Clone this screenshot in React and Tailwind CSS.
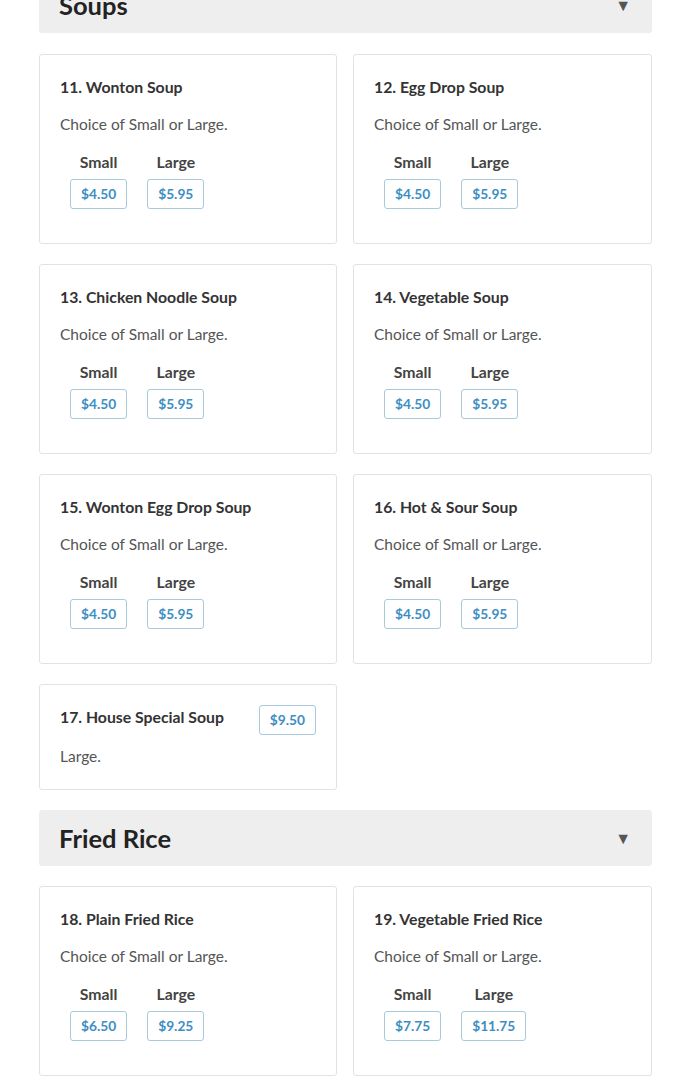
import React from "react";

const soups = [
  { name: "11. Wonton Soup", small: "$4.50", large: "$5.95" },
  { name: "12. Egg Drop Soup", small: "$4.50", large: "$5.95" },
  { name: "13. Chicken Noodle Soup", small: "$4.50", large: "$5.95" },
  { name: "14. Vegetable Soup", small: "$4.50", large: "$5.95" },
  { name: "15. Wonton Egg Drop Soup", small: "$4.50", large: "$5.95" },
  { name: "16. Hot & Sour Soup", small: "$4.50", large: "$5.95" },
];

const friedRice = [
  { name: "18. Plain Fried Rice", small: "$6.50", large: "$9.25" },
  { name: "19. Vegetable Fried Rice", small: "$7.75", large: "$11.75" },
];

const Price = ({ children }) => (
  <span className="flex h-[30px] items-center rounded-[3px] border border-[#a8cadb] px-[10px] text-[13.75px] font-bold text-[#3d8ec3]">
    {children}
  </span>
);

const SectionHeader = ({ title }) => (
  <div className="flex h-[56px] items-center justify-between rounded-[3px] bg-[#eeeeee] pl-5 pr-[21px]">
    <h2 className="text-[25.5px] font-bold text-[#222]">{title}</h2>
    <span className="text-[16px] text-[#555]">▼</span>
  </div>
);

const SizedCard = ({ item }) => (
  <div className="rounded-[3px] border border-[#e2e2e2] bg-white px-5 pb-[34px] pt-5">
    <h3 className="text-[15.8px] font-bold leading-6 text-[#333]">{item.name}</h3>
    <p className="mt-[13px] text-[15.5px] leading-6 text-[#555]">Choice of Small or Large.</p>
    <div className="mt-[14px] flex gap-5 pl-[10px]">
      <div className="flex flex-col items-center gap-[5px]">
        <span className="text-[15.8px] font-bold leading-6 text-[#444]">Small</span>
        <Price>{item.small}</Price>
      </div>
      <div className="flex flex-col items-center gap-[5px]">
        <span className="text-[15.8px] font-bold leading-6 text-[#444]">Large</span>
        <Price>{item.large}</Price>
      </div>
    </div>
  </div>
);

export default function App() {
  return (
    <div
      className="min-h-screen bg-white pl-[39px] pr-[38px]"
      style={{ fontFamily: "Lato, 'Open Sans', sans-serif" }}
    >
      <div className="-mt-[23px]">
        <SectionHeader title="Soups" />

        <div className="mt-[21px] grid grid-cols-[298px_1fr] gap-x-4 gap-y-5">
          {soups.map((s) => (
            <SizedCard key={s.name} item={s} />
          ))}
          {/* single price card */}
          <div className="rounded-[3px] border border-[#e2e2e2] bg-white px-5 pb-[21px] pt-5">
            <div className="flex items-start justify-between">
              <h3 className="text-[15.8px] font-bold leading-6 text-[#333]">
                17. House Special Soup
              </h3>
              <Price>$9.50</Price>
            </div>
            <p className="mt-[9px] text-[15.5px] leading-6 text-[#555]">Large.</p>
          </div>
        </div>

        <div className="mt-5">
          <SectionHeader title="Fried Rice" />
        </div>

        <div className="mt-5 grid grid-cols-[298px_1fr] gap-x-4 gap-y-5">
          {friedRice.map((s) => (
            <SizedCard key={s.name} item={s} />
          ))}
        </div>
      </div>
    </div>
  );
}
